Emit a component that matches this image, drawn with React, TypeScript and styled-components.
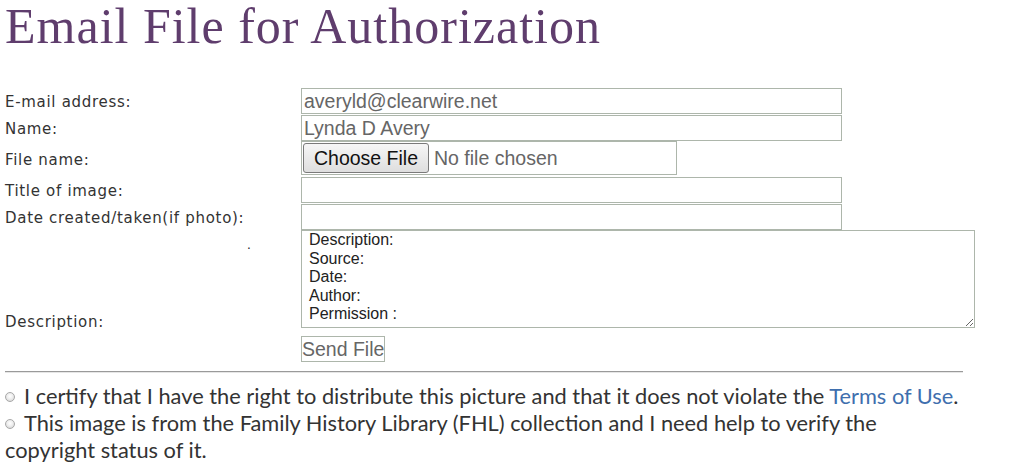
import styled, { createGlobalStyle } from "styled-components";

const GlobalStyle = createGlobalStyle`
  body {
    margin: 0;
    background: #fff;
    font-family: "DejaVu Sans", sans-serif;
    color: #333;
  }
`;

const Page = styled.div`
  padding: 0 0 0 5px;
  width: 1011px;
`;

const Title = styled.h1`
  margin: 0;
  padding-top: 1px;
  height: 87px;
  font-family: "Liberation Serif", serif;
  font-weight: 400;
  font-size: 50px;
  line-height: 50px;
  letter-spacing: 1px;
  color: #5f3d6d;
`;

const FormTable = styled.table`
  border-collapse: collapse;
  border-spacing: 0;

  td {
    padding: 0;
  }
`;

const LabelCell = styled.td<{ $align?: string }>`
  width: 296px;
  font-family: "DejaVu Sans", sans-serif;
  font-size: 15px;
  letter-spacing: 0.7px;
  color: #333;
  vertical-align: ${(p) => p.$align || "middle"};
`;

const FieldCell = styled.td`
  padding: 0;
`;

const TextField = styled.input`
  box-sizing: border-box;
  display: block;
  width: 541px;
  height: 26px;
  margin-bottom: 1px;
  padding: 0 2px;
  border: 1px solid #adb6ab;
  font-family: "Liberation Sans", Arial, sans-serif;
  font-size: 19.5px;
  color: #666;
  outline: none;
`;

const FileBox = styled.div`
  box-sizing: border-box;
  width: 376px;
  height: 34px;
  margin: -1px 0 2px;
  padding: 1px;
  border: 1px solid #adb6ab;
  display: flex;
  align-items: center;
  gap: 5px;
  font-family: "Liberation Sans", Arial, sans-serif;
  font-size: 19.5px;
  color: #666;
`;

const ChooseButton = styled.span`
  box-sizing: border-box;
  height: 30px;
  width: 126px;
  display: flex;
  align-items: center;
  justify-content: center;
  border: 1px solid #7a7a7a;
  border-radius: 3px;
  background: linear-gradient(#f6f6f6, #dedede);
  color: #111;
`;

const DescLabel = styled.div`
  height: 98px;
  display: flex;
  flex-direction: column;
  justify-content: space-between;
  margin-bottom: -3px;
  box-sizing: border-box;
`;

const Dot = styled.span`
  display: block;
  padding: 3px 0 0 242px;
  line-height: 18px;
  font-size: 12px;
  color: #222;
`;

const Notes = styled.textarea`
  box-sizing: border-box;
  display: block;
  width: 674px;
  height: 98px;
  margin-top: -1px;
  padding: 0 7px;
  border: 1px solid #adb6ab;
  font-family: "Liberation Sans", Arial, sans-serif;
  font-size: 16px;
  line-height: 18.5px;
  color: #222;
  resize: both;
  overflow: hidden;
  outline: none;
`;

const SendButton = styled.button`
  box-sizing: border-box;
  margin-top: 8px;
  height: 26px;
  width: 84px;
  padding: 0;
  border: 1px solid #adb6ab;
  background: #fff;
  font-family: "Liberation Sans", Arial, sans-serif;
  font-size: 19.5px;
  white-space: nowrap;
  color: #666;
`;

const Rule = styled.hr`
  width: 958px;
  margin: 9px 0 0;
  border: 0;
  border-top: 1px solid #9a9a9a;
  border-bottom: 1px solid #e6e6e6;
`;

const Statements = styled.div`
  padding-top: 9px;
  width: 960px;
  font-family: "Lato", "Open Sans", sans-serif;
  font-size: 21.8px;
  line-height: 27px;
  color: #333;
`;

const Radio = styled.span`
  display: inline-block;
  width: 10px;
  height: 10px;
  margin-right: 9px;
  border-radius: 50%;
  border: 1px solid #a8a8a8;
  box-sizing: border-box;
  background: radial-gradient(circle at 50% 40%, #fff 0, #eee 45%, #ccc 100%);
  vertical-align: 2px;
`;

const TermsLink = styled.a`
  color: #3f6fae;
  text-decoration: none;
`;

export default function App() {
  return (
    <Page>
      <GlobalStyle />
      <Title>Email File for Authorization</Title>
      <FormTable>
        <tbody>
          <tr>
            <LabelCell>E-mail address:</LabelCell>
            <FieldCell>
              <TextField defaultValue="averyld@clearwire.net" />
            </FieldCell>
          </tr>
          <tr>
            <LabelCell>Name:</LabelCell>
            <FieldCell>
              <TextField defaultValue="Lynda D Avery" />
            </FieldCell>
          </tr>
          <tr>
            <LabelCell>File name:</LabelCell>
            <FieldCell>
              <FileBox>
                <ChooseButton>Choose File</ChooseButton>
                <span>No file chosen</span>
              </FileBox>
            </FieldCell>
          </tr>
          <tr>
            <LabelCell>Title of image:</LabelCell>
            <FieldCell>
              <TextField />
            </FieldCell>
          </tr>
          <tr>
            <LabelCell>Date created/taken(if photo):</LabelCell>
            <FieldCell>
              <TextField />
            </FieldCell>
          </tr>
          <tr>
            <LabelCell $align="bottom">
              <DescLabel>
                <Dot>.</Dot>
                <span>Description:</span>
              </DescLabel>
            </LabelCell>
            <FieldCell>
              <Notes
                defaultValue={
                  "Description:\nSource:\nDate:\nAuthor:\nPermission :"
                }
              />
            </FieldCell>
          </tr>
          <tr>
            <LabelCell />
            <FieldCell>
              <SendButton>Send File</SendButton>
            </FieldCell>
          </tr>
        </tbody>
      </FormTable>
      <Rule />
      <Statements>
        <div>
          <Radio />I certify that I have the right to distribute this picture
          and that it does not violate the{" "}
          <TermsLink href="#">Terms of Use</TermsLink>.
        </div>
        <div>
          <Radio />This image is from the Family History Library (FHL)
          collection and I need help to verify the copyright status of it.
        </div>
      </Statements>
    </Page>
  );
}
